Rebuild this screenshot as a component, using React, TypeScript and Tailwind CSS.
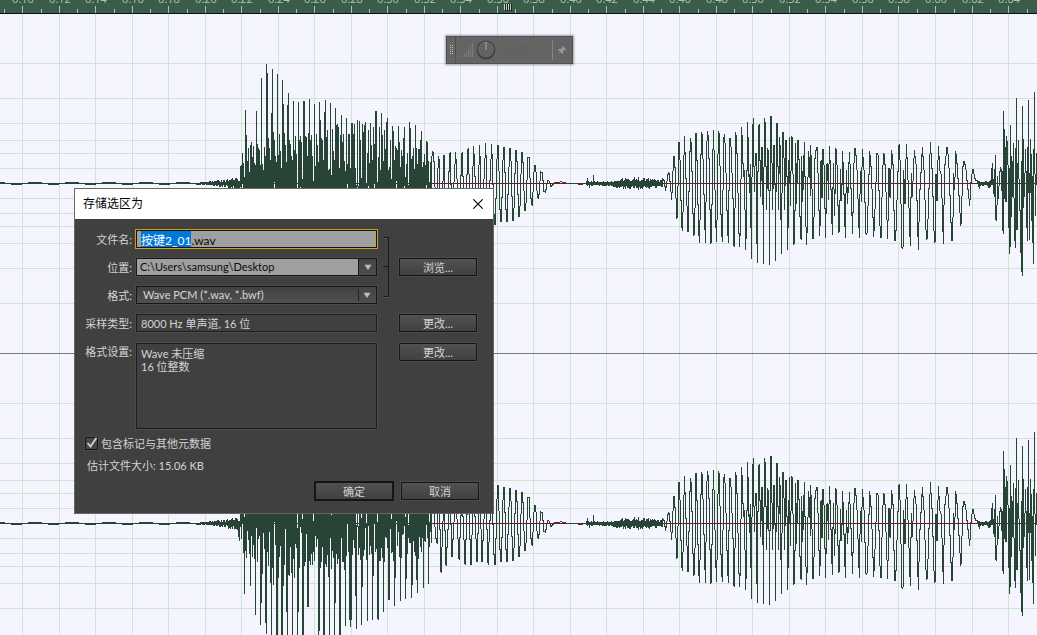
import { useEffect, useRef } from "react";
import type { ReactNode } from "react";
import clsx from "clsx";

const VIEW_WIDTH = 1037;
const CHANNEL_HEIGHT = 339;
const MID = 169;
const THIRD = 3;

type Point = [number, number];

// "x,y" pairs, three units per pixel, y measured down from the top of the strip
function trace(origin: number, mid: number, data: string): Point[] {
  return data
    .trim()
    .split(/\s+/)
    .map((pair) => {
      const [x, y] = pair.split(",").map(Number);
      return [origin + x / THIRD, (mid - y) / THIRD];
    });
}

const noise = (n: number) => {
  const v = Math.sin(n * 127.1) * 43758.5453;
  return v - Math.floor(v);
};

const attackCrests = trace(
  225,
  370,
  `46,318 49,316 52,280 60,151 64,225 67,304 70,264 76,255 79,247 82,292 85,259 91,315 94,154 98,253 100,265 103,270
  109,55 112,312 118,262 121,290 124,12 127,40 130,234 133,265 136,300 139,160 142,27 145,218 148,242 151,290 157,42
  160,285 163,222 166,274 172,61 175,132 178,220 181,256 184,308 187,136 190,100 193,240 197,252 199,290 205,123
  208,270 211,230 214,284 220,127 223,242 226,228 229,248 236,123 238,123 241,228 244,232 247,290 250,220 253,118
  256,242 259,226 262,290 268,132 274,222 277,256 283,128 286,180 289,234 292,240 298,156 301,120 304,232 307,210
  316,130 322,208 325,275 331,145 334,196 337,193 340,202 346,225 349,166 352,246 355,222 364,174 367,312 371,222
  373,222 379,189 382,190 385,224 388,194 397,180 403,184 406,240 412,193 415,216 418,197 421,188 427,280 430,210
  436,190 439,256 445,202 448,252 451,153 454,153 460,292 463,202 469,160 472,226 478,212 481,268 484,188 487,176
  493,322 496,242 502,198 505,214 511,260 514,266 517,270 520,200 523,248 529,270 532,290 535,234 538,202 544,312
  547,280 553,187 556,206 562,290 565,264 571,195 574,266 580,268 583,268 586,242 589,213 598,282 601,330 604,244
  607,246 616,306 619,308 622,274`,
);

const attackTroughs = [
  ...trace(
    0,
    250,
    `712,268 715,290 718,300 730,335 733,460 736,330 739,350 748,340 751,435 757,318 760,310 763,328 766,522 772,365
    781,553 784,486 787,398 796,548 799,580 805,375 811,425 814,640 817,380 820,435 829,640 832,640 835,410 844,680
    847,680 850,435 859,515 862,690 865,400 868,406 874,398 877,700 883,410 892,700 895,515`,
  ),
  ...trace(
    280,
    310,
    `4,740 7,740 10,493 13,432 19,573 22,570 25,462 28,465 34,458 37,720 43,470 52,720 55,575 58,444 67,700 70,700
    73,436 76,424 82,560 85,560 88,420 91,435 97,435 103,400 115,690 118,632 121,442 130,680 133,680 136,430 139,440
    145,470 148,670 154,446 163,660 166,548 172,430 178,650 181,650 187,396 193,448 196,618 199,404 208,596 211,618
    214,598 217,404 226,528 229,623 235,404 244,613 247,500 253,390 262,602 268,402 274,400 277,597 280,466 286,394
    292,597 295,597 298,420 301,422 307,412 310,576 313,424 325,538 328,538 334,398 340,422 343,558 346,474 352,376
    361,540 364,410 376,535 379,475 385,350 394,534 397,495 403,344 409,478 412,517 415,416 421,346 430,502 433,330
    446,490 464,473`,
  ),
];

const decay = [
  ...trace(400, 190, "88,260 93,128 98,95 101,100 106,225"),
  [437, -20] as Point,
  ...trace(400, 190, "115,108 118,122"),
  [441, -49] as Point,
  ...trace(400, 190, "132,105"),
  [446, -42] as Point,
  ...trace(400, 190, "150,97"),
  [452, -33] as Point,
  ...trace(400, 190, "167,98"),
  [459, -36] as Point,
  ...trace(400, 190, "186,97"),
  [465, -40] as Point,
  ...trace(400, 190, "204,85"),
  [471, -41] as Point,
  ...trace(400, 190, "221,80"),
  [477, -38] as Point,
  ...trace(400, 190, "239,76"),
  [482, -38] as Point,
  ...trace(400, 190, "257,71"),
  [488, -40] as Point,
  ...trace(
    400,
    190,
    `275,73 283,313 286,310 292,76 295,76 301,306 304,306 310,82 313,82 319,304 321,304 329,85 332,87 338,302 341,300
    347,91 350,92 356,290 359,290 365,97 368,98 374,270 377,273 384,112 387,112 394,255 397,255 403,136 407,138 412,232
    416,235 422,155 427,158 432,215 436,217 443,181 448,184 453,199 463,188 484,185 500,189 520,190 545,193 556,190`,
  ),
];

const secondWord = trace(
  640,
  250,
  `67,235 72,242 77,272 85,217 88,222 95,298 101,168 104,172 110,357 112,345 117,127 120,180 125,380 128,391 133,108
  136,180 141,318 144,395 151,114 154,130 159,340 161,406 164,398 168,99 171,180 176,400 179,424 184,97 187,105
  193,318 196,427 201,122 203,94 206,124 212,430 214,425 220,91 223,180 227,360 230,424 235,95 238,102 244,390
  247,421 251,115 254,103 257,180 262,368 265,427 269,114 272,114 279,295 281,436 284,436 287,97 290,120 298,438
  301,390 305,82 308,150 310,230 313,212 317,447 320,355 322,66 325,135 328,278 331,193 334,475 337,108 340,55
  343,275 346,160 349,160 350,372 352,488 355,76 358,74 362,290 365,142 368,142 370,487 373,55 376,70 380,325
  383,145 386,160 389,494 391,48 394,48 398,328 401,135 404,140 407,482 409,70 412,70 416,330 418,112 421,145
  424,462 428,98 431,97 434,325 437,120 440,120 443,448 448,113 451,318 455,110 458,118 461,432 464,432 467,130
  470,312 473,120 476,122 480,350 483,417 485,168 488,305 492,165 493,128 499,431 502,380 505,155 508,180 512,288
  511,137 515,195 518,415 521,410 525,175 529,142 532,144 539,405 541,350 543,182 546,293 548,148 551,150 557,413
  560,195 563,190 565,295 568,139 571,200 577,404 580,190 584,345 587,144 590,155 596,397 599,395 601,208 605,302
  608,153 616,412 619,210 623,310 628,156 631,208 638,402 641,205 645,144 650,180 658,412 661,215 664,305 667,148
  672,210 678,403 681,398 685,292 689,153 694,210 701,410 706,305 711,160 714,165 721,412 724,412 727,230 731,160
  734,165 743,416 747,205 750,290 755,150 759,192 764,420 767,420 773,240 777,134 780,180 786,443 789,440 791,212
  795,312 799,134 803,212 811,436 814,220 817,288 823,152 828,192 835,447 839,285 842,235 847,142 852,212 859,420
  862,412 866,298 871,127 877,220 883,428 886,425 888,222 891,300 895,139 900,215 904,225 910,428 914,200 921,141
  926,175 935,421 938,415 941,220 944,270 947,155 952,200 962,374 965,365 967,210 972,183 977,200 982,250 989,317
  994,230 999,208 1006,240 1012,242 1018,264 1024,246 1032,250 1040,243 1047,262 1054,235 1057,190 1060,260 1063,290
  1066,166 1068,360 1070,358 1073,230 1075,295 1078,240 1081,202 1085,212 1088,392 1090,35 1091,400 1094,87 1098,305
  1099,110 1103,138 1106,310 1108,460 1111,75 1112,438 1115,168 1117,290 1120,130 1123,375 1126,442 1129,-5 1131,388
  1135,122 1138,295 1141,350 1144,515 1147,18 1148,525 1150,117 1153,290 1157,148 1160,345 1162,420 1165,1 1168,415
  1171,118 1174,360 1175,162 1180,492 1183,-23 1186,345 1190,160 1195,300`,
);

type Column = { top: number; bottom: number };

function buildColumns(): Column[] {
  const columns: Column[] = Array.from({ length: VIEW_WIDTH }, (_, x) => {
    if (x < 200) {
      const phase = Math.sin((x + 12) / 5.9);
      return { top: phase > 0.35 ? 1 : 0, bottom: phase < -0.6 ? -1 : 0 };
    }
    let reach = 0;
    if (x < 218) reach = 1 + (x - 200) / 9;
    else if (x < 241) reach = 3 + (x - 218) / 6;
    else if (x >= 585 && x < 612) reach = 2;
    else if (x >= 612 && x < 660) reach = 3 + 3 * Math.sin(((x - 612) / 48) * Math.PI);
    else if (x >= 660 && x < 665) reach = 3;
    else if (x >= 978) reach = 2;
    return {
      top: Math.round(reach * (0.3 + 0.7 * noise(x))),
      bottom: -Math.round(reach * (0.3 + 0.7 * noise(x + 500))),
    };
  });

  columns[587].top = 5;
  columns[589].bottom = -4;
  columns[593].top = 8;
  columns[238].bottom = -12;
  columns[239].bottom = -16;

  for (let x = 241; x < 432; x++) {
    columns[x] = { top: 30 * noise(x) - 6, bottom: 4 - 42 * noise(x + 90) };
  }
  for (const [x, y] of attackCrests) {
    const column = columns[Math.floor(x)];
    column.top = Math.max(column.top, y);
  }
  for (const [x, y] of attackTroughs) {
    const column = columns[Math.floor(x)];
    column.bottom = Math.min(column.bottom, y);
  }

  // the open cycles follow the line itself, so each column spans what the line crosses
  for (const line of [decay, secondWord]) {
    const first = Math.ceil(line[0][0]);
    const last = Math.floor(line[line.length - 1][0]);
    for (let x = Math.max(first, 432); x <= last && x < VIEW_WIDTH; x++) {
      if (x < 978 || x > 994) columns[x] = { top: -Infinity, bottom: Infinity };
    }
    for (let i = 1; i < line.length; i++) {
      const [x0, y0] = line[i - 1];
      const [x1, y1] = line[i];
      const steps = Math.max(2, Math.ceil(Math.abs(y1 - y0) * 2), Math.ceil(Math.abs(x1 - x0) * 6));
      for (let s = 0; s <= steps; s++) {
        const column = columns[Math.floor(x0 + ((x1 - x0) * s) / steps)];
        if (!column) continue;
        const y = y0 + ((y1 - y0) * s) / steps;
        column.top = Math.max(column.top, y);
        column.bottom = Math.min(column.bottom, y);
      }
    }
  }
  return columns;
}

const wavePath = buildColumns()
  .map(({ top, bottom }, x) => {
    if (!Number.isFinite(top)) return "";
    const y = Math.round(MID - top);
    const height = Math.max(1, Math.round(top - bottom) + 1);
    return `M${x} ${y}h1v${height}h-1z`;
  })
  .join("");

const timeMarks = Array.from({ length: 28 }, (_, i) => ({
  x: Math.floor(22.5 + i * 36.52),
  label: (0.1 + i * 0.02).toFixed(2),
}));

const levelOffsets = [15, 30, 43, 60, 85, 120];

function Channel() {
  return (
    <svg
      className="block h-[339px] w-full shrink-0"
      viewBox={`0 0 ${VIEW_WIDTH} ${CHANNEL_HEIGHT}`}
      preserveAspectRatio="none"
      shapeRendering="crispEdges"
      aria-hidden="true"
    >
      <g fill="#cfe5cf">
        {levelOffsets.map((offset) => (
          <g key={offset}>
            <rect x="0" y={MID - offset} width={VIEW_WIDTH} height="1" />
            <rect x="0" y={MID + offset} width={VIEW_WIDTH} height="1" />
          </g>
        ))}
        {timeMarks.map(({ x }) => (
          <rect key={x} x={x} y="0" width="1" height={CHANNEL_HEIGHT} />
        ))}
      </g>
      <rect x="0" y={MID} width={VIEW_WIDTH} height="1" fill="#8f0d14" />
      <path d={wavePath} fill="#274437" />
    </svg>
  );
}

const percent = (x: number) => `${(x / VIEW_WIDTH) * 100}%`;

function Ruler() {
  return (
    <svg
      className="block h-[14px] w-full shrink-0 border-b border-[#0b120e] bg-[#3c5c4b] font-['Open_Sans',sans-serif] text-[11px]"
      shapeRendering="crispEdges"
    >
      {timeMarks.map(({ x, label }) => (
        <g key={label} fill="#a3c9b4">
          <rect x={percent(x)} y="6" width="1" height="7" />
          <rect x={percent(x - 18)} y="9" width="1" height="4" />
          <text x={percent(x + 1)} y="3" textAnchor="middle">
            {label}
          </text>
        </g>
      ))}
      <rect x={percent(1027)} y="9" width="1" height="4" fill="#a3c9b4" />
      {[504, 506, 508, 510].map((x) => (
        <g key={x}>
          <rect x={percent(x)} y="4" width="1" height="6" fill="#c3d0c8" />
          <rect x={percent(x + 1)} y="4" width="1" height="7" fill="#14241b" />
        </g>
      ))}
    </svg>
  );
}

function VolumeHud() {
  return (
    <div className="absolute left-[43%] top-9 flex h-7 w-[127px] items-center border border-[#505050] bg-[#646464] shadow-[0_0_2px_1px_rgba(0,0,0,0.35)]">
      <svg className="h-full w-[9px] border-r border-[#505050]" shapeRendering="crispEdges" aria-hidden="true">
        {[9, 11, 13, 15, 17].map((y) => (
          <g key={y} fill="#c0c0c0">
            <rect x="3" y={y - 1} width="1" height="1" />
            <rect x="5" y={y - 1} width="1" height="1" />
          </g>
        ))}
      </svg>
      <svg className="ml-[2px] h-4 w-4" viewBox="0 0 16 16" shapeRendering="crispEdges" aria-hidden="true">
        {[0, 2, 4, 6, 8, 10, 12, 14].map((x) => (
          <rect key={x} x={x} y={14 - Math.round((x * x) / 15)} width="1" height={Math.round((x * x) / 15) + 1} fill="#7b7b7b" />
        ))}
      </svg>
      <svg className="ml-[2px] h-5 w-5" viewBox="0 0 20 20" aria-hidden="true">
        <circle cx="10" cy="10" r="9.4" fill="#404040" />
        <circle cx="10" cy="9.6" r="7.8" fill="#727272" />
        <circle cx="10" cy="10.2" r="7.2" fill="#626262" />
        <path d="M10 1.5v8.500" stroke="#a6a6a6" strokeWidth="1" />
      </svg>
      <span className="ml-1 flex-1 font-['Open_Sans',sans-serif] text-[11px] text-[#5f5f5f]">+0 dB</span>
      <span className="h-5 w-px bg-[#858585]" />
      <button type="button" aria-label="Pin" className="flex h-full w-[19px] items-center justify-center">
        <svg className="h-[10px] w-[10px]" viewBox="0 0 10 10" aria-hidden="true">
          <path
            d="M5.6.8 9.2 4.4 8.3 5 7.4 4.8 6 6.3 6 8.2 5.2 8.9 3.3 6.9.5 9.5 3 6.5 1.1 4.7 1.8 4 3.8 4 5.2 2.6 5 1.6z"
            fill="#989898"
          />
        </svg>
      </button>
    </div>
  );
}

function DialogButton({ children, primary = false }: { children: ReactNode; primary?: boolean }) {
  return (
    <button
      type="button"
      className={clsx(
        "flex items-center justify-center border-[#151515] bg-linear-to-b from-[#515151] to-[#414141] leading-none text-[#d4d4d4]",
        primary
          ? "h-5 w-20 border-2"
          : "h-[18px] w-[78px] border shadow-[0_0_0_1px_#4b4b4b]",
      )}
    >
      {children}
    </button>
  );
}

function SelectBox({ id, value, light = false }: { id: string; value: string; light?: boolean }) {
  return (
    <div className="relative h-[18px] border border-[#161616] shadow-[0_0_0_1px_#4b4b4b]">
      <select
        id={id}
        className={clsx(
          "block h-full w-full appearance-none pr-5 leading-4 outline-none",
          light
            ? "bg-[#9f9f9f] pl-[3px] text-[#0c0c0c]"
            : "bg-linear-to-b from-[#414141] to-[#515151] pl-[6px] text-[#d6d6d6]",
        )}
      >
        <option>{value}</option>
      </select>
      <span
        className={clsx(
          "pointer-events-none absolute inset-y-0 right-0 flex w-[18px] items-center justify-center bg-linear-to-b from-[#464646] to-[#4e4e4e]",
          light && "border-l border-[#161616]",
        )}
      >
        {!light && <span className="absolute left-0 h-3 w-px bg-[#222222]" />}
        <svg className="h-[6px] w-2" viewBox="0 0 8 6" aria-hidden="true">
          <path d="M0 0h8L4 6z" fill="#bdbdbd" />
          <path d="M0 0h8" stroke="#161616" strokeWidth="1" />
        </svg>
      </span>
    </div>
  );
}

function SaveDialog() {
  const nameRef = useRef<HTMLInputElement>(null);

  useEffect(() => {
    const el = nameRef.current;
    if (!el) return;
    el.focus();
    el.setSelectionRange(0, el.value.lastIndexOf("."));
  }, []);

  return (
    <form
      role="dialog"
      aria-labelledby="dialog-title"
      className="absolute left-[74px] top-[188px] w-[420px] border border-[#676767] bg-[#404040] font-['Lato','Noto_Sans_CJK_SC',sans-serif] text-[11px] leading-[13px] text-[#d4d4d4]"
      onSubmit={(e) => e.preventDefault()}
    >
      <header className="flex h-[30px] items-center justify-between bg-white pl-2 pr-[10px] text-black">
        <h1 id="dialog-title" className="text-xs">
          存储选区为
        </h1>
        <button type="button" aria-label="关闭">
          <svg className="h-[10px] w-[10px]" viewBox="0 0 10 10" aria-hidden="true">
            <path d="M.3.3l9.400 9.400M9.700.3l-9.400 9.400" stroke="#000" strokeWidth="1.1" />
          </svg>
        </button>
      </header>

      <div className="grid grid-cols-[57px_241px_6px_78px] gap-y-[10px] pt-[11px]">
        <label htmlFor="file-name" className="self-center text-right">
          文件名:
        </label>
        <div className="col-start-2 ml-1 w-[241px]">
          <input
            ref={nameRef}
            id="file-name"
            type="text"
            defaultValue="按键2_01.wav"
            className="block h-[18px] w-full border border-[#161616] bg-[#9f9f9f] px-1 text-xs leading-none text-[#0c0c0c] shadow-[0_0_0_1px_#d49a12] outline-none selection:bg-[#0078d7] selection:text-white"
          />
        </div>
        <svg
          className="col-start-3 row-span-3 row-start-1 ml-[10px] h-[61px] w-[6px] self-center"
          viewBox="0 0 6 61"
          shapeRendering="crispEdges"
          aria-hidden="true"
        >
          <path d="M0 .5h5.500M5.500.5v60M0 59.500h5.500M0 29.500h5.500" stroke="#1a1a1a" fill="none" />
          <path d="M0 60.500h6M0 1.500h4" stroke="#585858" fill="none" />
        </svg>

        <label htmlFor="location" className="col-start-1 row-start-2 self-center text-right">
          位置:
        </label>
        <div className="col-start-2 row-start-2 ml-1 w-[241px]">
          <SelectBox id="location" value="C:\Users\samsung\Desktop" light />
        </div>
        <div className="col-start-4 row-start-2 ml-5">
          <DialogButton>浏览...</DialogButton>
        </div>

        <label htmlFor="format" className="col-start-1 row-start-3 self-center text-right">
          格式:
        </label>
        <div className="col-start-2 row-start-3 ml-1 w-[241px]">
          <SelectBox id="format" value="Wave PCM (*.wav, *.bwf)" />
        </div>

        <span className="col-start-1 row-start-4 self-center whitespace-nowrap text-right">采样类型:</span>
        <output className="col-start-2 row-start-4 ml-1 flex h-[18px] w-[241px] items-center border border-[#1e1e1e] px-1 shadow-[0_0_0_1px_#4b4b4b]">
          8000 Hz 单声道, 16 位
        </output>
        <div className="col-start-4 row-start-4 ml-5">
          <DialogButton>更改...</DialogButton>
        </div>
      </div>

      <div className="mt-[11px] grid grid-cols-[57px_241px_6px_78px]">
        <span className="whitespace-nowrap pt-[2px] text-right">格式设置:</span>
        <output className="ml-1 block h-[86px] w-[241px] border border-[#1e1e1e] px-1 py-[3px] shadow-[0_0_0_1px_#4b4b4b]">
          <p>Wave 未压缩</p>
          <p>16 位整数</p>
        </output>
        <div className="col-start-4 ml-5">
          <DialogButton>更改...</DialogButton>
        </div>
      </div>

      <label className="mt-2 flex w-fit items-center gap-[3px] pl-[10px]">
        <span className="relative block h-[13px] w-[13px]">
          <input
            type="checkbox"
            defaultChecked
            className="block h-[13px] w-[13px] appearance-none border border-[#141414] bg-[#484848] shadow-[0_0_0_1px_#4b4b4b]"
          />
          <svg className="pointer-events-none absolute inset-0 h-[13px] w-[13px]" viewBox="0 0 13 13" aria-hidden="true">
            <path d="M2.500 6l3 3.500L11.500.8" fill="none" stroke="#d2d2d2" strokeWidth="1.8" />
          </svg>
        </span>
        包含标记与其他元数据
      </label>
      <p className="mt-[9px] pl-3">估计文件大小: 15.06 KB</p>

      <footer className="mt-[9px] flex items-center justify-end gap-[7px] pb-3 pr-[14px]">
        <DialogButton primary>确定</DialogButton>
        <DialogButton>取消</DialogButton>
      </footer>
    </form>
  );
}

export default function App() {
  return (
    <main className="relative flex h-screen flex-col overflow-hidden bg-[#f5f5ff]">
      <Ruler />
      <Channel />
      <div className="h-px shrink-0 bg-[#777777]" />
      <Channel />
      <VolumeHud />
      <SaveDialog />
    </main>
  );
}
